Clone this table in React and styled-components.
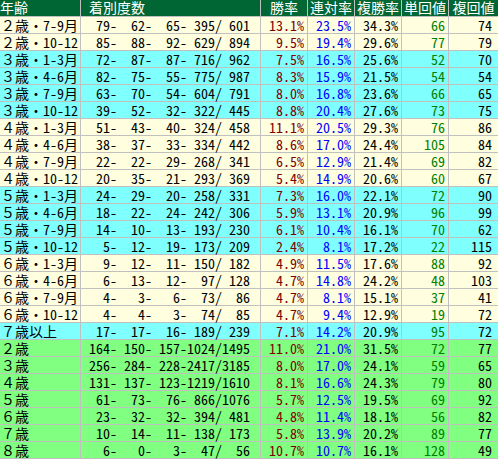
import React from "react";
import styled, { createGlobalStyle } from "styled-components";

const Global = createGlobalStyle`
  html, body { margin: 0; padding: 0; background: #ffffff; }
  body { font-family: "Noto Sans Mono CJK JP", "Liberation Mono", monospace; }
`;

const COLS = "80px 179px 46px 46px 46px 46px 1fr";

const Table = styled.div`
  width: 498px;
  display: flex;
  flex-direction: column;
  gap: 1px;
  background: #c0c0c0;
  padding-bottom: 1px;
  font-family: "Noto Sans Mono CJK JP", "Liberation Mono", monospace;
  font-size: 14px;
`;

const Row = styled.div`
  display: grid;
  grid-template-columns: ${COLS};
  column-gap: 1px;
  height: 16px;
`;

const tones = {
  head: "#006633",
  cream: "#ffffe0",
  cyan: "#80ffff",
  green: "#80ff80",
};

const Cell = styled.div`
  background: ${(p) => tones[p.$tone]};
  color: ${(p) => p.$color || "#000000"};
  text-align: ${(p) => p.$align || "right"};
  padding: 0 ${(p) => p.$pr ?? 3}px 0 ${(p) => p.$pl ?? 0}px;
  line-height: 16px;
  height: 16px;
  white-space: pre;
`;

const HeadCell = styled(Cell)`
  color: #ffffff;
  line-height: 15px;
`;

const rows = [
  ["２歳・7-9月", [79, 62, 65, 395, 601], "13.1", "23.5", "34.3", 66, 74, "cream"],
  ["２歳・10-12", [85, 88, 92, 629, 894], "9.5", "19.4", "29.6", 77, 79, "cream"],
  ["３歳・1-3月", [72, 87, 87, 716, 962], "7.5", "16.5", "25.6", 52, 70, "cyan"],
  ["３歳・4-6月", [82, 75, 55, 775, 987], "8.3", "15.9", "21.5", 54, 54, "cyan"],
  ["３歳・7-9月", [63, 70, 54, 604, 791], "8.0", "16.8", "23.6", 66, 65, "cyan"],
  ["３歳・10-12", [39, 52, 32, 322, 445], "8.8", "20.4", "27.6", 73, 75, "cyan"],
  ["４歳・1-3月", [51, 43, 40, 324, 458], "11.1", "20.5", "29.3", 76, 86, "cream"],
  ["４歳・4-6月", [38, 37, 33, 334, 442], "8.6", "17.0", "24.4", 105, 84, "cream"],
  ["４歳・7-9月", [22, 22, 29, 268, 341], "6.5", "12.9", "21.4", 69, 82, "cream"],
  ["４歳・10-12", [20, 35, 21, 293, 369], "5.4", "14.9", "20.6", 60, 67, "cream"],
  ["５歳・1-3月", [24, 29, 20, 258, 331], "7.3", "16.0", "22.1", 72, 90, "cyan"],
  ["５歳・4-6月", [18, 22, 24, 242, 306], "5.9", "13.1", "20.9", 96, 99, "cyan"],
  ["５歳・7-9月", [14, 10, 13, 193, 230], "6.1", "10.4", "16.1", 70, 62, "cyan"],
  ["５歳・10-12", [5, 12, 19, 173, 209], "2.4", "8.1", "17.2", 22, 115, "cyan"],
  ["６歳・1-3月", [9, 12, 11, 150, 182], "4.9", "11.5", "17.6", 88, 92, "cream"],
  ["６歳・4-6月", [6, 13, 12, 97, 128], "4.7", "14.8", "24.2", 48, 103, "cream"],
  ["６歳・7-9月", [4, 3, 6, 73, 86], "4.7", "8.1", "15.1", 37, 41, "cream"],
  ["６歳・10-12", [4, 4, 3, 74, 85], "4.7", "9.4", "12.9", 19, 72, "cream"],
  ["７歳以上", [17, 17, 16, 189, 239], "7.1", "14.2", "20.9", 95, 72, "cyan"],
  ["２歳", [164, 150, 157, 1024, 1495], "11.0", "21.0", "31.5", 72, 77, "green"],
  ["３歳", [256, 284, 228, 2417, 3185], "8.0", "17.0", "24.1", 59, 65, "green"],
  ["４歳", [131, 137, 123, 1219, 1610], "8.1", "16.6", "24.3", 79, 80, "green"],
  ["５歳", [61, 73, 76, 866, 1076], "5.7", "12.5", "19.5", 69, 92, "green"],
  ["６歳", [23, 32, 32, 394, 481], "4.8", "11.4", "18.1", 56, 82, "green"],
  ["７歳", [10, 14, 11, 138, 173], "5.8", "13.9", "20.2", 89, 77, "green"],
  ["８歳", [6, 0, 3, 47, 56], "10.7", "10.7", "16.1", 128, 49, "green"],
];

const pad = (n, w) => String(n).padStart(w, " ");
const record = ([a, b, c, d, e]) =>
  `${pad(a, 3)}-${pad(b, 4)}-${pad(c, 4)}-${pad(d, 4)}/${pad(e, 4)} `;

export default function App() {
  return (
    <>
      <Global />
      <Table>
        <Row>
          <HeadCell $tone="head" $align="left" $pr={0}>年齢</HeadCell>
          <HeadCell $tone="head" $align="left" $pl={8}>着別度数</HeadCell>
          <HeadCell $tone="head" $align="center" $pr={0}>勝率</HeadCell>
          <HeadCell $tone="head" $align="center" $pr={0}>連対率</HeadCell>
          <HeadCell $tone="head" $align="center" $pr={0}>複勝率</HeadCell>
          <HeadCell $tone="head" $align="center" $pr={0}>単回値</HeadCell>
          <HeadCell $tone="head" $align="center" $pr={0}>複回値</HeadCell>
        </Row>
        {rows.map(([age, rec, w, r, s, t, f, tone]) => (
          <Row key={age}>
            <Cell $tone={tone} $align="left" $pl={1}>{age}</Cell>
            <Cell $tone={tone}>{record(rec)}</Cell>
            <Cell $tone={tone} $color="#800000">{w}%</Cell>
            <Cell $tone={tone} $color="#0000ff">{r}%</Cell>
            <Cell $tone={tone}>{s}%</Cell>
            <Cell $tone={tone} $color="#008000">{t}</Cell>
            <Cell $tone={tone} $pr={6}>{f}</Cell>
          </Row>
        ))}
      </Table>
    </>
  );
}
